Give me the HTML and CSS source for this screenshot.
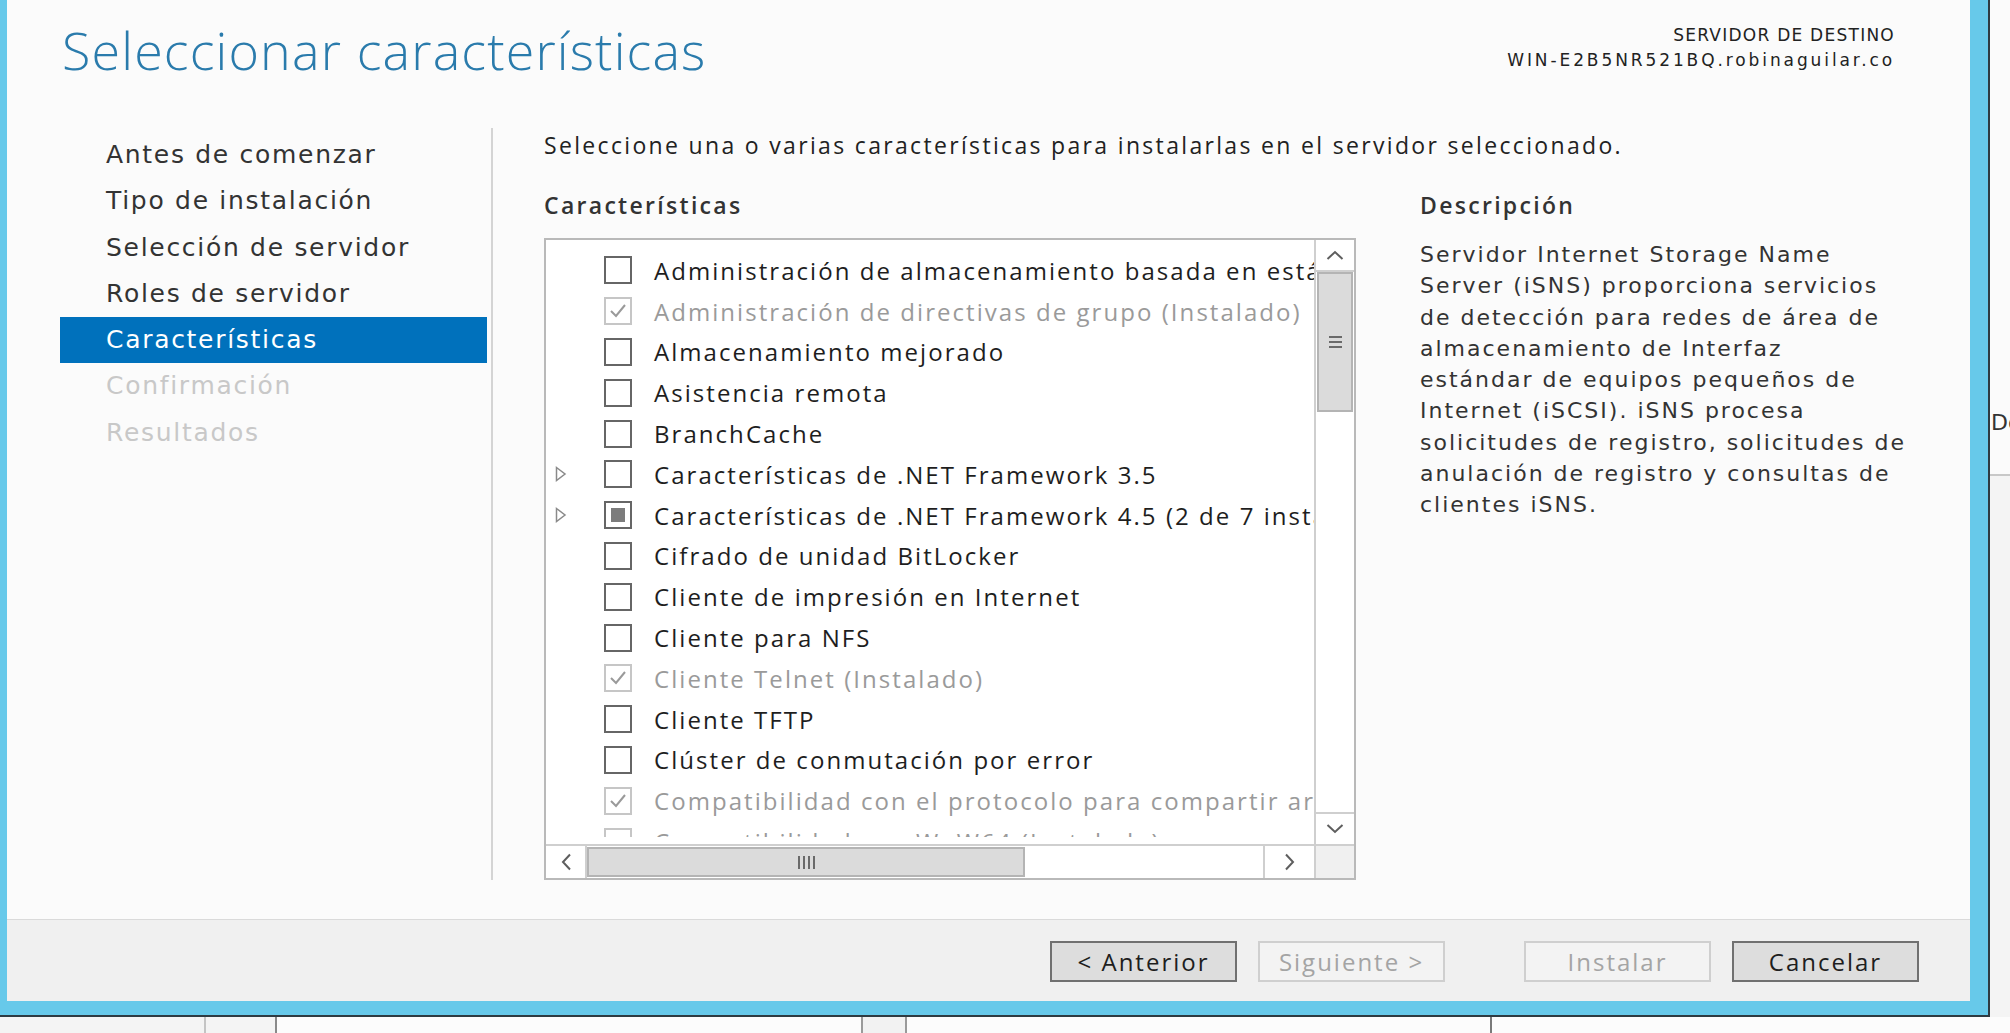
FILE: index.html
```html
<!DOCTYPE html>
<html lang="es">
<head>
<meta charset="utf-8">
<title>Seleccionar características</title>
<link rel="stylesheet" href="styles.css">
</head>
<body>
<div class="screen">
  <div class="window">
    <div class="dialog">
      <header class="head">
        <h1 class="title">Seleccionar características</h1>
        <div class="dest">
          <div class="dest-label">SERVIDOR DE DESTINO</div>
          <div class="dest-name">WIN-E2B5NR521BQ.robinaguilar.co</div>
        </div>
      </header>
      <div class="main">
        <nav class="steps">
          <div class="step">Antes de comenzar</div>
          <div class="step">Tipo de instalación</div>
          <div class="step">Selección de servidor</div>
          <div class="step">Roles de servidor</div>
          <div class="step active">Características</div>
          <div class="step off">Confirmación</div>
          <div class="step off">Resultados</div>
        </nav>
        <div class="sep"></div>
        <div class="content">
          <p class="intro">Seleccione una o varias características para instalarlas en el servidor seleccionado.</p>
          <div class="cols">
            <div class="feat">
              <div class="colhead">Características</div>
              <div class="listbox">
                <div class="view">
                  <div class="rows">
                    <div class="row"><span class="exp"></span><span class="cb"></span><span class="lbl">Administración de almacenamiento basada en estándares</span></div>
                    <div class="row inst"><span class="exp"></span><span class="cb"><svg width="18" height="16" viewBox="0 0 18 16"><path d="M2 8 L7 13 L16 2" fill="none" stroke="#9a9a9a" stroke-width="2"/></svg></span><span class="lbl">Administración de directivas de grupo (Instalado)</span></div>
                    <div class="row"><span class="exp"></span><span class="cb"></span><span class="lbl">Almacenamiento mejorado</span></div>
                    <div class="row"><span class="exp"></span><span class="cb"></span><span class="lbl">Asistencia remota</span></div>
                    <div class="row"><span class="exp"></span><span class="cb"></span><span class="lbl">BranchCache</span></div>
                    <div class="row"><span class="exp"><svg width="12" height="16" viewBox="0 0 12 16"><path d="M1.5 1.5 L10 8 L1.5 14.5 Z" fill="none" stroke="#8a8a8a" stroke-width="1.5"/></svg></span><span class="cb"></span><span class="lbl">Características de .NET Framework 3.5</span></div>
                    <div class="row"><span class="exp"><svg width="12" height="16" viewBox="0 0 12 16"><path d="M1.5 1.5 L10 8 L1.5 14.5 Z" fill="none" stroke="#8a8a8a" stroke-width="1.5"/></svg></span><span class="cb"><span class="part"></span></span><span class="lbl">Características de .NET Framework 4.5 (2 de 7 instalados)</span></div>
                    <div class="row"><span class="exp"></span><span class="cb"></span><span class="lbl">Cifrado de unidad BitLocker</span></div>
                    <div class="row"><span class="exp"></span><span class="cb"></span><span class="lbl">Cliente de impresión en Internet</span></div>
                    <div class="row"><span class="exp"></span><span class="cb"></span><span class="lbl">Cliente para NFS</span></div>
                    <div class="row inst"><span class="exp"></span><span class="cb"><svg width="18" height="16" viewBox="0 0 18 16"><path d="M2 8 L7 13 L16 2" fill="none" stroke="#9a9a9a" stroke-width="2"/></svg></span><span class="lbl">Cliente Telnet (Instalado)</span></div>
                    <div class="row"><span class="exp"></span><span class="cb"></span><span class="lbl">Cliente TFTP</span></div>
                    <div class="row"><span class="exp"></span><span class="cb"></span><span class="lbl">Clúster de conmutación por error</span></div>
                    <div class="row inst"><span class="exp"></span><span class="cb"><svg width="18" height="16" viewBox="0 0 18 16"><path d="M2 8 L7 13 L16 2" fill="none" stroke="#9a9a9a" stroke-width="2"/></svg></span><span class="lbl">Compatibilidad con el protocolo para compartir archivos SMB 1.0/CIFS (Instalado)</span></div>
                    <div class="row inst"><span class="exp"></span><span class="cb"></span><span class="lbl">Compatibilidad con WoW64 (Instalado)</span></div>
                  </div>
                </div>
                <div class="vs">
                  <div class="sbtn up"><svg width="18" height="10" viewBox="0 0 18 10"><path d="M1.5 9 L9 2 L16.5 9" fill="none" stroke="#5e5e5e" stroke-width="2"/></svg></div>
                  <div class="vthumb"><span class="grip-h"></span><span class="grip-h"></span><span class="grip-h"></span></div>
                  <div class="vtrack"></div>
                  <div class="sbtn down"><svg width="18" height="10" viewBox="0 0 18 10"><path d="M1.5 1 L9 8 L16.5 1" fill="none" stroke="#5e5e5e" stroke-width="2"/></svg></div>
                </div>
                <div class="hs">
                  <div class="hbtn left"><svg width="10" height="18" viewBox="0 0 10 18"><path d="M9 1.5 L2 9 L9 16.5" fill="none" stroke="#5e5e5e" stroke-width="2"/></svg></div>
                  <div class="hthumb"><span class="grip-v"></span><span class="grip-v"></span><span class="grip-v"></span><span class="grip-v"></span></div>
                  <div class="htrack"></div>
                  <div class="hbtn right"><svg width="10" height="18" viewBox="0 0 10 18"><path d="M1 1.5 L8 9 L1 16.5" fill="none" stroke="#5e5e5e" stroke-width="2"/></svg></div>
                </div>
                <div class="corner"></div>
              </div>
            </div>
            <div class="desc">
              <div class="colhead">Descripción</div>
              <p class="desctext">Servidor Internet Storage Name<br>Server (iSNS) proporciona servicios<br>de detección para redes de área de<br>almacenamiento de Interfaz<br>estándar de equipos pequeños de<br>Internet (iSCSI). iSNS procesa<br>solicitudes de registro, solicitudes de<br>anulación de registro y consultas de<br>clientes iSNS.</p>
            </div>
          </div>
        </div>
      </div>
      <footer class="foot">
        <div class="btn">&lt; Anterior</div>
        <div class="btn dis">Siguiente &gt;</div>
        <div class="btn dis gapl">Instalar</div>
        <div class="btn">Cancelar</div>
      </footer>
    </div>
  </div>
  <div class="side">
    <div class="side-top"><span class="side-txt">Documentos</span></div>
    <div class="side-bottom"></div>
  </div>
  <div class="strip">
    <div class="seg s1"></div><div class="ln l1"></div>
    <div class="seg s2"></div><div class="ln l2"></div>
    <div class="seg s3"></div><div class="ln l3"></div>
    <div class="seg s4"></div><div class="ln l4"></div>
    <div class="seg s5"></div><div class="ln l5"></div>
    <div class="seg s6"></div>
  </div>
</div>
</body>
</html>
```

FILE: styles.css
```css
* { box-sizing: border-box; margin: 0; padding: 0; }
html, body { width: 2010px; height: 1033px; overflow: hidden; }
body { font-family: "Open Sans", "DejaVu Sans", sans-serif; background: #fbfbfb; color: #222; }

.screen { display: grid; grid-template-columns: 1990px 20px; grid-template-rows: 1017px 16px; width: 2010px; height: 1033px; }

.window { background: #67c9ea; border-right: 2px solid #2e3b42; border-bottom: 2px solid #2e3b42; padding: 0 18px 14px 7px; }
.dialog { height: 100%; display: flex; flex-direction: column; background: #fbfbfb; }

.head { height: 128px; flex: none; display: flex; justify-content: space-between; padding: 0 75px 0 55px; }
.title { font-weight: 300; font-size: 52px; line-height: 60px; margin-top: 20px; color: #2a7bac; letter-spacing: 1.15px; }
.dest { padding-top: 23px; text-align: right; font-family: "DejaVu Sans", sans-serif; font-size: 17px; line-height: 25px; color: #222; }
.dest-label { letter-spacing: 1.25px; }
.dest-name { letter-spacing: 2.9px; }

.main { flex: 1; display: flex; }
.steps { margin-left: 53px; width: 427px; flex: none; padding-top: 4px; }
.step { height: 46.3px; line-height: 46.3px; padding-left: 46px; font-family: "DejaVu Sans", sans-serif; font-size: 25px; letter-spacing: 1.7px; color: #333; white-space: nowrap; }
.step.active { background: #0071bc; color: #fff; }
.step.off { color: #c8c8c8; }
.sep { width: 2px; height: 752px; background: #d4d4d4; margin-left: 4px; flex: none; }

.content { margin-left: 51px; flex: 1; }
.intro { margin-top: 2px; font-size: 23px; letter-spacing: 2.33px; line-height: 30px; color: #222; white-space: nowrap; }
.cols { display: flex; margin-top: 30px; }
.feat { width: 812px; flex: none; }
.colhead { font-weight: 600; font-size: 23px; letter-spacing: 2.3px; line-height: 30px; color: #333; }

.listbox { margin-top: 18px; width: 812px; height: 642px; border: 2px solid #b9b9b9; background: #fff; display: grid; grid-template-columns: 1fr 40px; grid-template-rows: 1fr 34px; }
.view { overflow: hidden; }
.rows { height: 597px; overflow: hidden; padding-top: 10px; }
.row { height: 40.8px; display: flex; align-items: center; padding-left: 9px; white-space: nowrap; font-size: 24px; letter-spacing: 2.05px; color: #1e1e1e; }
.row.inst { color: #9a9a9a; }
.exp { width: 49px; flex: none; display: flex; align-items: center; }
.cb { width: 28px; height: 28px; flex: none; margin-right: 22px; border: 2px solid #666; background: #fff; display: flex; align-items: center; justify-content: center; }
.row.inst .cb { border-color: #c6c6c6; }
.part { width: 14px; height: 14px; background: #7c7c7c; }

.vs { display: flex; flex-direction: column; border-left: 2px solid #cfcfcf; background: #fff; }
.sbtn { height: 32px; flex: none; display: flex; align-items: center; justify-content: center; }
.sbtn.up { border-bottom: 2px solid #cfcfcf; }
.sbtn.down { border-top: 2px solid #cfcfcf; }
.vthumb { height: 140px; flex: none; margin: 0 1px; background: #dbdbdb; border: 2px solid #b4b4b4; display: flex; flex-direction: column; align-items: center; justify-content: center; gap: 3px; }
.grip-h { width: 13px; height: 2px; background: #6a6a6a; }
.vtrack { flex: 1; }

.hs { display: flex; border-top: 2px solid #cfcfcf; background: #fff; }
.hbtn { width: 41px; flex: none; display: flex; align-items: center; justify-content: center; }
.hbtn.left { border-right: 2px solid #cfcfcf; }
.hbtn.right { width: 51px; border-left: 2px solid #cfcfcf; }
.hthumb { width: 438px; flex: none; margin: 1px 0; background: #dbdbdb; border: 2px solid #b4b4b4; display: flex; align-items: center; justify-content: center; gap: 3px; }
.grip-v { width: 2px; height: 13px; background: #6a6a6a; }
.htrack { flex: 1; }
.corner { background: #f0f0f0; border-top: 2px solid #cfcfcf; border-left: 2px solid #cfcfcf; }

.desc { margin-left: 64px; }
.desctext { margin-top: 19px; font-family: "DejaVu Sans", sans-serif; font-size: 22px; letter-spacing: 2px; line-height: 31.3px; color: #333; white-space: nowrap; }

.foot { height: 82px; flex: none; border-top: 1px solid #dadada; background: #f0f0f0; display: flex; justify-content: flex-end; align-items: flex-start; gap: 21px; padding: 21px 51px 0 0; }
.btn { width: 187px; height: 41px; border: 2px solid #707070; background: #dddddd; font-size: 24px; letter-spacing: 2px; color: #1e1e1e; display: flex; align-items: center; justify-content: center; }
.btn.dis { border-color: #cfcfcf; background: #f3f3f3; color: #a4a4a4; }
.btn.gapl { margin-left: 58px; }

.side { display: flex; flex-direction: column; overflow: hidden; background: #fbfbfb; }
.side-top { height: 474px; flex: none; padding-top: 410px; padding-left: 1px; overflow: hidden; white-space: nowrap; }
.side-txt { font-family: "DejaVu Sans", sans-serif; font-size: 22px; color: #333; }
.side-bottom { flex: 1; border-top: 2px solid #c8c8c8; background: #f4f4f4; }

.strip { grid-column: 1 / 3; display: flex; background: #fbfbfb; }
.seg { height: 100%; }
.ln { width: 2px; height: 100%; flex: none; }
.s1 { width: 204px; background: #f4f4f4; }
.s2 { width: 69px; background: #f4f4f4; }
.s3 { width: 584px; background: #fcfcfc; }
.s4 { width: 42px; background: #f2f2f2; }
.s5 { width: 583px; background: #fcfcfc; }
.s6 { flex: 1; background: #fcfcfc; }
.l1 { background: #c4c4c4; }
.l2 { background: #8a8a8a; }
.l3 { background: #9a9a9a; }
.l4 { background: #9a9a9a; }
.l5 { background: #7a7a7a; }
```
